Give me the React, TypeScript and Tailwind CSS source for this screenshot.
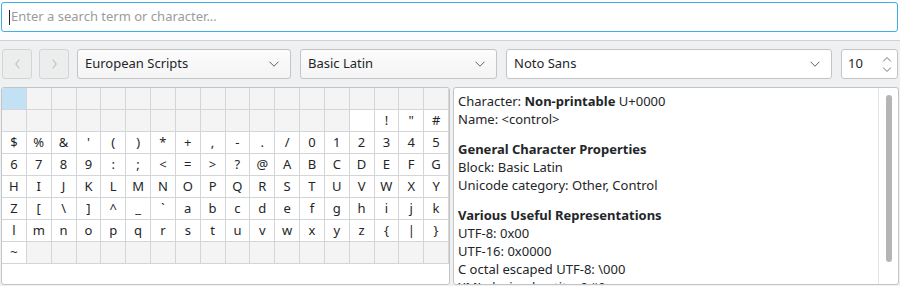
import React from 'react';

function Chevron({ dir, className }: { dir: 'left' | 'right' | 'down' | 'up'; className?: string }) {
  const d = {
    left: 'M6 1 L2 6 L6 11',
    right: 'M2 1 L6 6 L2 11',
    down: 'M1 2 L6 7 L11 2',
    up: 'M1 7 L6 2 L11 7',
  }[dir];
  const box = dir === 'left' || dir === 'right' ? '0 0 8 12' : '0 0 12 9';
  return (
    <svg viewBox={box} className={className} fill="none" stroke="currentColor" strokeWidth="1">
      <path d={d} />
    </svg>
  );
}

function Combo({ label, width, editable }: { label: string; width: string; editable?: boolean }) {
  return (
    <div
      className={`${width} h-[30px] flex items-center justify-between pl-[7px] pr-[10px] rounded-[3px] border border-[#c3c4c5] ${
        editable ? 'bg-white' : 'bg-gradient-to-b from-[#fcfcfc] to-[#f4f4f4]'
      }`}
    >
      <span>{label}</span>
      <Chevron dir="down" className="w-[12px] h-[8px] text-[#4d4d4d]" />
    </div>
  );
}

function CharGrid() {
  const cells = Array.from({ length: 144 }, (_, cp) => cp);
  return (
    <div className="w-[449px] h-[198px] border border-[#c3c4c5] rounded-[3px] bg-white overflow-hidden">
      <div className="grid grid-cols-[repeat(18,minmax(0,1fr))]">
        {cells.map((cp) => {
          const control = cp < 0x20 || cp >= 0x7f;
          const selected = cp === 0;
          const bg = selected ? 'bg-[#c3e1f5]' : control ? 'bg-[#f4f4f4]' : 'bg-white';
          return (
            <div
              key={cp}
              className={`h-[22px] flex items-center justify-center border-r border-b border-[#d4d5d6] ${bg}`}
            >
              {!control && cp !== 0x20 ? String.fromCharCode(cp) : ''}
            </div>
          );
        })}
      </div>
    </div>
  );
}

function InfoPanel() {
  return (
    <div className="flex-1 h-[198px] border border-[#c3c4c5] rounded-[3px] bg-white overflow-hidden flex">
      <div className="flex-1 pl-[4px] pt-[4px] leading-[18px]">
        <div>
          Character: <b>Non-printable</b> U+0000
        </div>
        <div>Name: &lt;control&gt;</div>
        <div className="mt-[12px] font-bold">General Character Properties</div>
        <div>Block: Basic Latin</div>
        <div>Unicode category: Other, Control</div>
        <div className="mt-[12px] font-bold">Various Useful Representations</div>
        <div>UTF-8: 0x00</div>
        <div>UTF-16: 0x0000</div>
        <div>C octal escaped UTF-8: \000</div>
        <div>XML decimal entity: &amp;#0;</div>
      </div>
      <div className="w-[20px] border-l border-[#e3e4e5] flex justify-center pt-[7px]">
        <div className="w-[6px] h-[167px] rounded-full bg-[#b4b5b6]" />
      </div>
    </div>
  );
}

export default function App() {
  return (
    <div className="w-[900px] h-[286px] overflow-hidden bg-[#eff0f1] font-['Noto_Sans',sans-serif] text-[13px] text-[#232629] flex flex-col">
      {/* search */}
      <div className="h-[41px] bg-[#fcfcfc] border-b border-[#d1d2d3] pl-[1px] pr-[2px] pt-[2px]">
        <div className="h-[30px] bg-white border border-[#3daee9] rounded-[3px] flex items-center pl-[7px]">
          <span className="w-[1px] h-[15px] bg-[#232629] mr-[1px]" />
          <span className="text-[#9a9c9e]">Enter a search term or character...</span>
        </div>
      </div>

      {/* toolbar */}
      <div className="flex items-center pl-[2px] pt-[8px] h-[38px]">
        <div className="w-[30px] h-[30px] rounded-[3px] border border-[#d3d4d5] bg-[#eceded] flex items-center justify-center">
          <Chevron dir="left" className="w-[7px] h-[12px] text-[#a7a8a9]" />
        </div>
        <div className="ml-[7px] w-[30px] h-[30px] rounded-[3px] border border-[#d3d4d5] bg-[#eceded] flex items-center justify-center">
          <Chevron dir="right" className="w-[7px] h-[12px] text-[#a7a8a9]" />
        </div>
        <div className="ml-[8px]">
          <Combo label="European Scripts" width="w-[214px]" />
        </div>
        <div className="ml-[9px]">
          <Combo label="Basic Latin" width="w-[197px]" />
        </div>
        <div className="ml-[9px]">
          <Combo label="Noto Sans" width="w-[326px]" editable />
        </div>
        <div className="ml-[9px] w-[57px] h-[30px] rounded-[3px] border border-[#c3c4c5] bg-white flex items-center justify-between pl-[6px] pr-[4px]">
          <span>10</span>
          <div className="flex flex-col gap-[3px]">
            <Chevron dir="up" className="w-[12px] h-[7px] text-[#4d4d4d]" />
            <Chevron dir="down" className="w-[12px] h-[7px] text-[#4d4d4d]" />
          </div>
        </div>
      </div>

      {/* content */}
      <div className="flex gap-[3px] pl-[1px] pr-[1px] pt-[8px]">
        <CharGrid />
        <InfoPanel />
      </div>
    </div>
  );
}
